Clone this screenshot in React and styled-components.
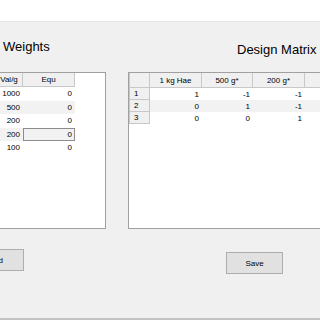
import React from "react";
import styled, { createGlobalStyle } from "styled-components";

const Global = createGlobalStyle`
  html, body { margin: 0; padding: 0; background: #f0f0f0; }
  body { font-family: "Liberation Sans", Arial, sans-serif; }
`;

const Frame = styled.div`
  width: 320px;
  height: 320px;
  overflow: hidden;
  display: flex;
  flex-direction: column;
  background: #f0f0f0;
`;

const TopBar = styled.div`
  height: 21px;
  flex: none;
  background: #ffffff;
  border-bottom: 1px solid #e6e6e6;
`;

const Content = styled.div`
  flex: 1;
  display: flex;
  gap: 22px;
  min-height: 0;
`;

const Column = styled.div`
  flex: none;
  width: ${(p) => p.$w}px;
  display: flex;
  flex-direction: column;
`;

const Title = styled.div`
  font-size: 13px;
  line-height: 15px;
  height: 15px;
  color: #000;
  margin-top: ${(p) => p.$top}px;
  margin-bottom: ${(p) => p.$bottom}px;
  padding-left: ${(p) => p.$indent}px;
  white-space: nowrap;
`;

const Panel = styled.div`
  height: 157px;
  box-sizing: border-box;
  background: #ffffff;
  border: 1px solid #a0a0a0;
  ${(p) => (p.$cutLeft ? "border-left: none;" : "")}
  ${(p) => (p.$cutRight ? "border-right: none;" : "")}
  overflow: hidden;
`;

const Grid = styled.div`
  display: grid;
  grid-template-columns: ${(p) => p.$cols};
  margin-left: ${(p) => p.$shift || 0}px;
  font-size: 8px;
  color: #000;
`;

const HeadCell = styled.div`
  height: ${(p) => p.$h || 14}px;
  box-sizing: border-box;
  background: #f0f0f0;
  border-right: 1px solid #c8c8c8;
  border-bottom: 1px solid #c8c8c8;
  ${(p) => (p.$edge ? "border-left: 1px solid #c8c8c8;" : "")}
  display: flex;
  align-items: center;
  justify-content: center;
  white-space: nowrap;
`;

const RowHead = styled.div`
  height: ${(p) => p.$h}px;
  box-sizing: border-box;
  background: #f0f0f0;
  border-right: 1px solid #c8c8c8;
  border-bottom: 1px solid #c8c8c8;
  border-left: 1px solid #c8c8c8;
  display: flex;
  align-items: center;
  padding-left: 4px;
`;

const Cell = styled.div`
  height: ${(p) => p.$h}px;
  box-sizing: border-box;
  background: ${(p) => (p.$stripe ? "#f2f2f2" : "#ffffff")};
  display: flex;
  align-items: center;
  justify-content: flex-end;
  padding-right: 3px;
  ${(p) => (p.$selected ? "outline: 1px solid #8c8c8c; outline-offset: -1px;" : "")}
`;

const Button = styled.button`
  width: ${(p) => p.$w}px;
  height: 22px;
  margin-top: ${(p) => p.$top}px;
  margin-left: ${(p) => p.$left}px;
  box-sizing: border-box;
  background: #e1e1e1;
  border: 1px solid #adadad;
  font-family: "Liberation Sans", Arial, sans-serif;
  font-size: 8px;
  color: #000;
  padding: 0;
`;

const BottomLine = styled.div`
  height: 2px;
  flex: none;
  background: #c2c2c2;
`;

const weights = [1000, 500, 200, 200, 100];
const matrix = [
  [1, -1, -1],
  [0, 1, -1],
  [0, 0, 1],
];
const matHead = ["1 kg Hae", "500 g*", "200 g*"];

export default function App() {
  return (
    <>
      <Global />
      <Frame>
        <TopBar />
        <Content>
          <Column $w={106}>
            <Title $top={17} $bottom={18} $indent={3}>
              Weights
            </Title>
            <Panel $cutLeft>
              <Grid $cols="27px 52px" $shift={-4}>
                <HeadCell>Val/g</HeadCell>
                <HeadCell>Equ</HeadCell>
                {weights.map((w, i) => (
                  <React.Fragment key={i}>
                    <Cell $h={13.5} $stripe={i % 2 === 1}>{w}</Cell>
                    <Cell $h={13.5} $stripe={i % 2 === 1} $selected={i === 3}>
                      0
                    </Cell>
                  </React.Fragment>
                ))}
              </Grid>
            </Panel>
            <Button $w={60} $top={20} $left={-36}>
              Load
            </Button>
          </Column>
          <Column $w={240}>
            <Title $top={20} $bottom={15} $indent={109}>
              Design Matrix
            </Title>
            <Panel $cutRight>
              <Grid $cols="21px 52px 51px 52px 60px">
                <HeadCell $h={15} $edge />
                {matHead.map((h) => (
                  <HeadCell key={h} $h={15}>
                    {h}
                  </HeadCell>
                ))}
                <HeadCell $h={15} />
                {matrix.map((row, r) => (
                  <React.Fragment key={r}>
                    <RowHead $h={12}>{r + 1}</RowHead>
                    {row.map((v, c) => (
                      <Cell key={c} $h={12} $stripe={r === 1}>
                        {v}
                      </Cell>
                    ))}
                    <Cell $h={12} $stripe={r === 1} />
                  </React.Fragment>
                ))}
              </Grid>
            </Panel>
            <Button $w={57} $top={23} $left={98}>
              Save
            </Button>
          </Column>
        </Content>
        <BottomLine />
      </Frame>
    </>
  );
}
